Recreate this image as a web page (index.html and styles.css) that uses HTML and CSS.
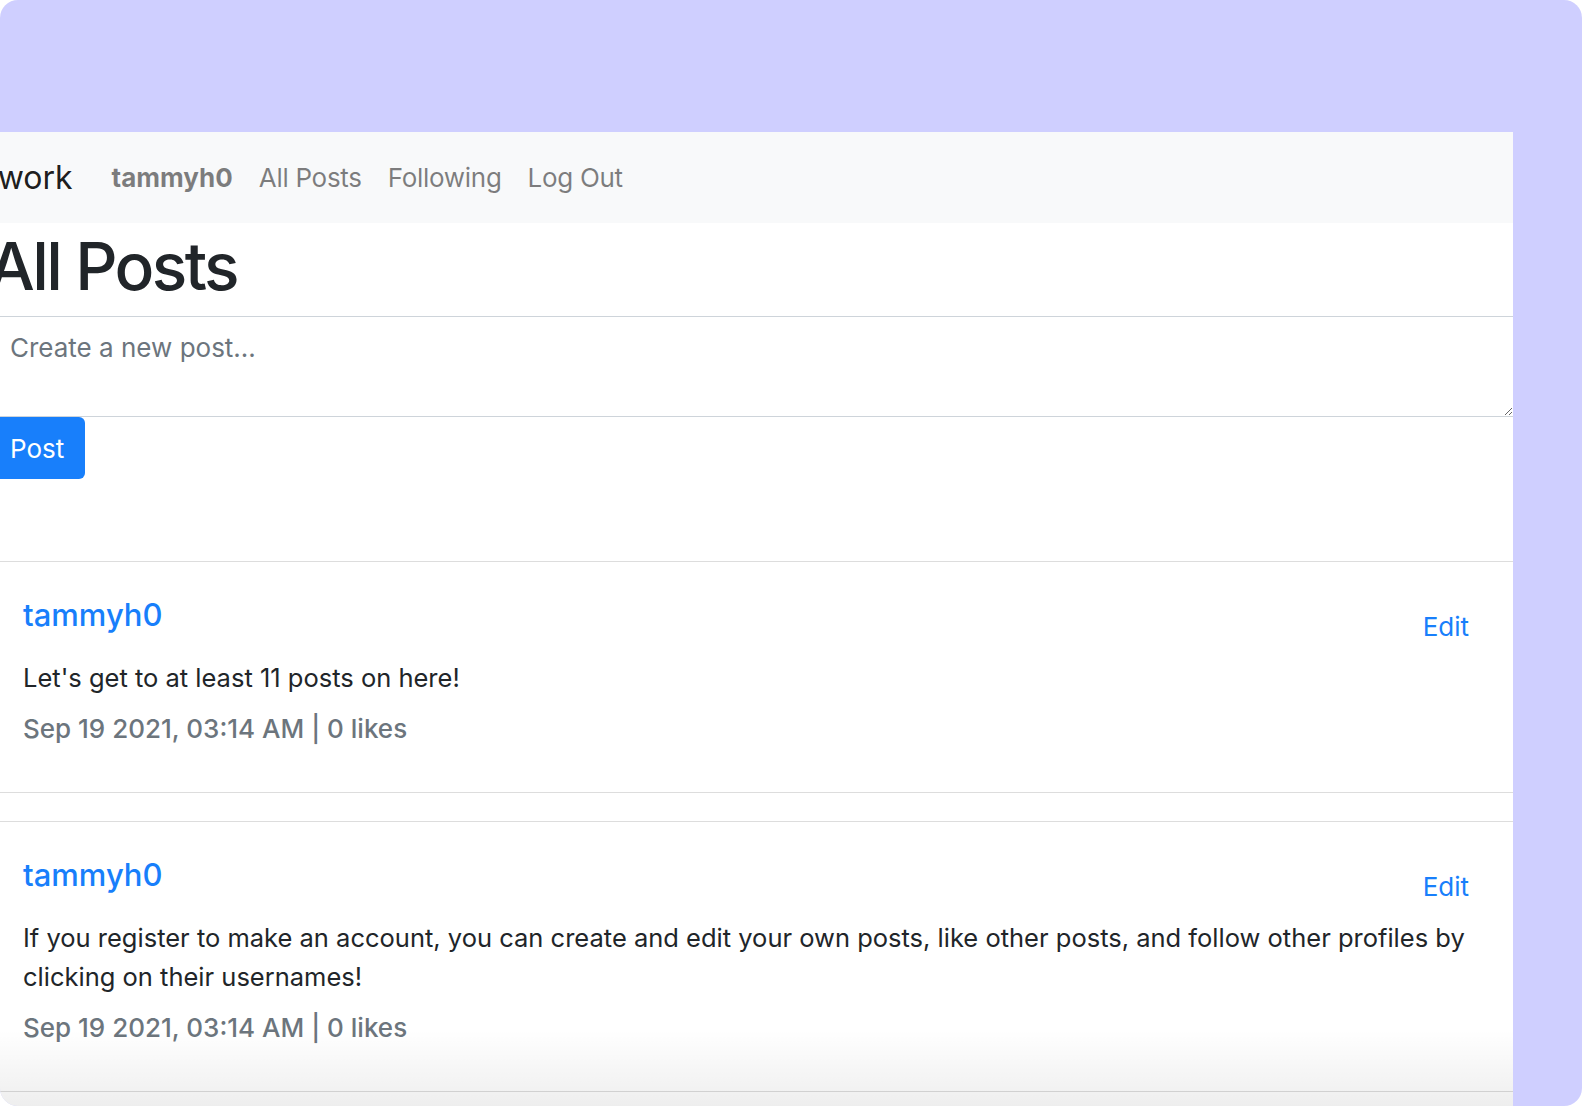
FILE: index.html
```html
<!DOCTYPE html>
<html lang="en">
<head>
<meta charset="utf-8">
<title>Network - All Posts</title>
<link rel="stylesheet" href="styles.css">
</head>
<body>
<div class="frame">
  <div class="window">
    <nav class="navbar">
      <a class="brand" href="#">Network</a>
      <ul class="nav-list">
        <li><a class="nav-link" href="#"><strong>tammyh0</strong></a></li>
        <li><a class="nav-link" href="#">All Posts</a></li>
        <li><a class="nav-link" href="#">Following</a></li>
        <li><a class="nav-link" href="#">Log Out</a></li>
      </ul>
    </nav>
    <main class="content">
      <h1 class="title">All Posts</h1>
      <form class="new-post">
        <textarea class="post-input" placeholder="Create a new post..."></textarea>
        <button type="button" class="btn-post">Post</button>
      </form>
      <div class="posts">
        <div class="card">
          <div class="card-head">
            <a class="username" href="#">tammyh0</a>
            <a class="edit" href="#">Edit</a>
          </div>
          <p class="post-body">Let's get to at least 11 posts on here!</p>
          <p class="post-meta">Sep 19 2021, 03:14 AM | 0 likes</p>
        </div>
        <div class="card">
          <div class="card-head">
            <a class="username" href="#">tammyh0</a>
            <a class="edit" href="#">Edit</a>
          </div>
          <p class="post-body">If you register to make an account, you can create and edit your own posts, like other posts, and follow other profiles by clicking on their usernames!</p>
          <p class="post-meta">Sep 19 2021, 03:14 AM | 0 likes</p>
        </div>
      </div>
    </main>
    <div class="fade"></div>
  </div>
</div>
</body>
</html>
```

FILE: styles.css
```css
* { box-sizing: border-box; }

html, body {
  margin: 0;
  padding: 0;
  background: #ffffff;
}

body {
  font-family: Inter, "Noto Sans", "DejaVu Sans", sans-serif;
  color: #212529;
}

.frame {
  width: 1582px;
  height: 1106px;
  background: #cfcfff;
  border-radius: 18px;
  overflow: hidden;
  padding-top: 132px;
}

.window {
  position: relative;
  width: 1513px;
  height: 974px;
  background: #ffffff;
  overflow: hidden;
}

.navbar {
  display: flex;
  align-items: center;
  height: 91px;
  background: #f8f9fa;
}

.brand {
  margin-left: -56px;
  margin-right: 26px;
  font-size: 32px;
  line-height: 39px;
  color: rgba(0, 0, 0, 0.9);
  text-decoration: none;
  white-space: nowrap;
}

.nav-list {
  display: flex;
  list-style: none;
  margin: 0;
  padding: 0;
}

.nav-link {
  display: block;
  padding: 0 13px;
  font-size: 26px;
  line-height: 39px;
  letter-spacing: -0.3px;
  color: rgba(0, 0, 0, 0.5);
  text-decoration: none;
  white-space: nowrap;
}

.nav-link strong { font-weight: 700; letter-spacing: 0; }

.content {
  margin-left: -12px;
  width: 1538px;
}

.title {
  margin: 0;
  padding-top: 3px;
  height: 93px;
  font-size: 66px;
  line-height: 80px;
  font-weight: 500;
  color: #212529;
  letter-spacing: -2.6px;
}

.new-post {
  display: flex;
  flex-direction: column;
  align-items: flex-start;
}

.post-input {
  display: block;
  width: 1526px;
  height: 101px;
  margin: 0;
  padding: 11px 21px;
  border: 1px solid #ced4da;
  border-radius: 0;
  font-family: inherit;
  font-size: 26px;
  line-height: 39px;
  color: #495057;
  resize: vertical;
}

.post-input::placeholder { color: #6c757d; }

.btn-post {
  height: 62px;
  padding: 0 21px 0 22px;
  border: none;
  border-radius: 0 6px 6px 0;
  background: #187ffb;
  color: #ffffff;
  font-family: inherit;
  font-size: 26px;
  line-height: 39px;
}

.posts {
  display: flex;
  flex-direction: column;
  gap: 28px;
  margin-top: 82px;
}

.card {
  border: 1px solid #dddddd;
  padding: 33px 56px 44px 34px;
}

.card-head {
  display: flex;
  justify-content: space-between;
  align-items: flex-start;
  height: 39px;
}

.username {
  font-size: 31px;
  line-height: 39px;
  font-weight: 500;
  color: #187ffb;
  text-decoration: none;
}

.edit {
  margin-top: 12px;
  font-size: 26px;
  line-height: 39px;
  color: #187ffb;
  text-decoration: none;
}

.post-body {
  margin: 24px 0 0;
  font-size: 25.5px;
  line-height: 39px;
  color: #212529;
}

.post-meta {
  margin: 12px 0 0;
  font-size: 26px;
  line-height: 39px;
  font-weight: 500;
  color: #6c757d;
}

.fade {
  position: absolute;
  left: 0;
  right: 0;
  bottom: 0;
  height: 76px;
  background: linear-gradient(rgba(0, 0, 0, 0), rgba(0, 0, 0, 0.065));
  pointer-events: none;
}
```
